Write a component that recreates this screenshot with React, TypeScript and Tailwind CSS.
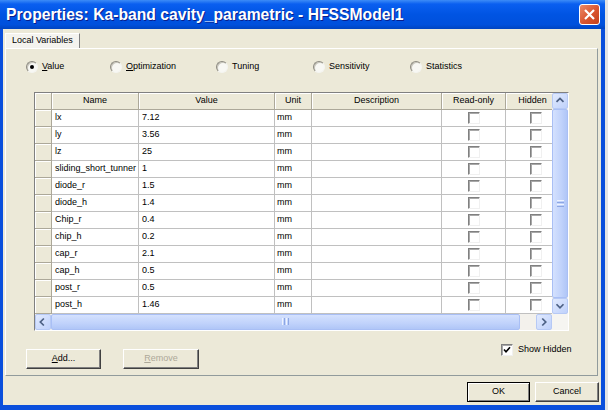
import React from 'react';

const rows = [
    ['lx', '7.12'],
    ['ly', '3.56'],
    ['lz', '25'],
    ['sliding_short_tunner', '1'],
    ['diode_r', '1.5'],
    ['diode_h', '1.4'],
    ['Chip_r', '0.4'],
    ['chip_h', '0.2'],
    ['cap_r', '2.1'],
    ['cap_h', '0.5'],
    ['post_r', '0.5'],
    ['post_h', '1.46'],
];

const cols = [
    { label: 'Name', w: 'w-[87px]' },
    { label: 'Value', w: 'w-[136px]' },
    { label: 'Unit', w: 'w-[37px]' },
    { label: 'Description', w: 'w-[130px]' },
    { label: 'Read-only', w: 'w-[64px]' },
    { label: 'Hidden', w: 'w-[64px] pr-[10px]' },
];

function Radio({ checked, label, u }: { checked?: boolean; label: string; u?: boolean }) {
    return (
        <div className="flex items-center gap-[4px]">
            <span className="w-[12px] h-[12px] rounded-full bg-[#f8f8f4] border border-t-[#8c8a80] border-l-[#8c8a80] border-b-[#f4f4f0] border-r-[#f4f4f0] shadow-[inset_1px_1px_0_#c8c6bc] flex items-center justify-center">
                {checked && <span className="w-[4px] h-[4px] rounded-full bg-black" />}
            </span>
            <span>
                {u ? <><span className="underline">{label[0]}</span>{label.slice(1)}</> : label}
            </span>
        </div>
    );
}

function Check({ checked }: { checked?: boolean }) {
    return (
        <span className="w-[12px] h-[12px] bg-white border border-t-[#808080] border-l-[#808080] border-b-[#f0f0f0] border-r-[#f0f0f0] shadow-[inset_1px_1px_0_#a8a8a8] flex items-center justify-center">
            {checked && (
                <svg width="8" height="8" viewBox="0 0 8 8">
                    <path d="M1 3.5 L3 5.8 L7 1.2" stroke="#000" strokeWidth="1.6" fill="none" />
                </svg>
            )}
        </span>
    );
}

function Arrow({ dir }: { dir: 'up' | 'down' | 'left' | 'right' }) {
    const d = {
        up: 'M4 9 L8 5 L12 9',
        down: 'M4 6 L8 10 L12 6',
        left: 'M9 4 L5 8 L9 12',
        right: 'M6 4 L10 8 L6 12',
    }[dir];
    return (
        <div className="w-[16px] h-[16px] rounded-[2px] border border-[#b6c9f5] bg-[linear-gradient(135deg,#e1eafe,#bfd1fb)] flex items-center justify-center">
            <svg width="16" height="16" viewBox="0 0 16 16">
                <path d={d} stroke="#4d6185" strokeWidth="2" fill="none" />
            </svg>
        </div>
    );
}

function Btn({ children, def, disabled, w }: { children: React.ReactNode; def?: boolean; disabled?: boolean; w: string }) {
    return (
        <div
            className={`${w} h-[20px] flex items-center justify-center bg-[#ece9d8] ${
                def
                    ? 'border border-black shadow-[inset_1px_1px_0_#fff,inset_-1px_-1px_0_#808080]'
                    : 'border border-t-white border-l-white border-r-[#404040] border-b-[#404040] shadow-[inset_-1px_-1px_0_#808080]'
            } ${disabled ? 'text-[#aca899]' : 'text-black'}`}
        >
            {children}
        </div>
    );
}

export default function App() {
    return (
        <div className="w-[608px] h-[410px] overflow-hidden bg-[#e4e4e4] flex font-[family-name:Liberation_Sans,Arial,sans-serif] text-[9px] text-black">
            <div className="w-[605px] h-[410px] flex flex-col bg-[#0a4fdc]">
                {/* title bar */}
                <div className="h-[29px] flex items-center pl-[6px] pr-[5px] bg-[linear-gradient(to_bottom,#3d8cf7_0%,#0a5ff0_14%,#0054e3_50%,#0050dc_85%,#0044c0_100%)]">
                    <span className="text-white font-bold text-[15.7px] [text-shadow:1px_1px_#0a1e8c] flex-1 whitespace-nowrap">
                        Properties: Ka-band cavity_parametric - HFSSModel1
                    </span>
                    <div className="w-[21px] h-[21px] rounded-[3px] border border-white bg-[linear-gradient(135deg,#eb8a68,#d9542e_55%,#c4401c)] flex items-center justify-center">
                        <svg width="13" height="13" viewBox="0 0 13 13">
                            <path d="M2 2 L11 11 M11 2 L2 11" stroke="#fff" strokeWidth="2.2" />
                        </svg>
                    </div>
                </div>

                {/* body */}
                <div className="flex-1 ml-[3px] mr-[4px] mb-[5px] bg-[#ece9d8] flex flex-col">
                    <div className="pt-[4px] pl-[2px] flex">
                        <div className="h-[15px] w-[75px] flex items-center pl-[6px] border-t border-l border-white border-r border-r-[#808080] bg-[#f4f3ee]">
                            Local Variables
                        </div>
                    </div>

                    {/* tab panel */}
                    <div className="ml-[2px] w-[593px] h-[328px] border border-t-white border-l-white border-r-[#919b9c] border-b-[#919b9c] flex flex-col">
                        <div className="pt-[11px] pl-[20px] flex">
                            <div className="w-[84px]"><Radio checked label="Value" u /></div>
                            <div className="w-[106px]"><Radio label="Optimization" u /></div>
                            <div className="w-[97px]"><Radio label="Tuning" /></div>
                            <div className="w-[97px]"><Radio label="Sensitivity" /></div>
                            <div><Radio label="Statistics" /></div>
                        </div>

                        {/* grid */}
                        <div className="mt-[18px] ml-[28px] w-[535px] border border-t-[#808080] border-l-[#808080] border-r-white border-b-white flex flex-col">
                            <div className="flex">
                                <div className="w-[517px] overflow-hidden">
                                    <div className="w-[600px]">
                                        <div className="flex h-[17px]">
                                            <div className="w-[17px] bg-[#ece9d8] border-r border-b border-[#aca899] shadow-[inset_1px_1px_0_#fff]" />
                                            {cols.map(c => (
                                                <div key={c.label} className={`${c.w} flex items-center justify-center bg-[#ece9d8] border-r border-b border-[#aca899] shadow-[inset_1px_1px_0_#fff]`}>
                                                    {c.label}
                                                </div>
                                            ))}
                                        </div>
                                        {rows.map(([n, v]) => (
                                            <div key={n} className="flex h-[17px]">
                                                <div className="w-[17px] bg-[#ece9d8] border-r border-b border-[#aca899] shadow-[inset_1px_1px_0_#fff]" />
                                                <div className="w-[87px] pl-[3px] flex items-center bg-white border-r border-b border-[#c0c0c0] whitespace-nowrap overflow-hidden">{n}</div>
                                                <div className="w-[136px] pl-[3px] flex items-center bg-white border-r border-b border-[#c0c0c0]">{v}</div>
                                                <div className="w-[37px] pl-[2px] flex items-center bg-white border-r border-b border-[#c0c0c0]">mm</div>
                                                <div className="w-[130px] bg-white border-r border-b border-[#c0c0c0]" />
                                                <div className="w-[64px] flex items-center justify-center bg-white border-r border-b border-[#c0c0c0]"><Check /></div>
                                                <div className="w-[64px] flex items-center justify-center pr-[3px] bg-white border-r border-b border-[#c0c0c0]"><Check /></div>
                                            </div>
                                        ))}
                                    </div>
                                </div>
                                {/* vertical scrollbar */}
                                <div className="w-[16px] h-[221px] flex flex-col bg-[#f3f1ec]">
                                    <Arrow dir="up" />
                                    <div className="flex-1 rounded-[2px] border border-[#a9bff5] bg-[linear-gradient(to_right,#d4e1fe,#c0d2fb_60%,#b0c6f7)] flex items-center justify-center">
                                        <div className="w-[7px] flex flex-col gap-[1px]">
                                            <div className="h-[1px] bg-[#eef3ff]" />
                                            <div className="h-[1px] bg-[#8ca6e4]" />
                                            <div className="h-[1px] bg-[#eef3ff]" />
                                            <div className="h-[1px] bg-[#8ca6e4]" />
                                        </div>
                                    </div>
                                    <Arrow dir="down" />
                                </div>
                            </div>
                            {/* horizontal scrollbar */}
                            <div className="flex h-[16px]">
                                <div className="w-[517px] flex bg-[#f3f1ec]">
                                    <Arrow dir="left" />
                                    <div className="w-[469px] rounded-[2px] border border-[#a9bff5] bg-[linear-gradient(to_bottom,#d4e1fe,#c0d2fb_60%,#b0c6f7)] flex items-center justify-center">
                                        <div className="h-[7px] flex gap-[1px]">
                                            <div className="w-[1px] bg-[#eef3ff]" />
                                            <div className="w-[1px] bg-[#8ca6e4]" />
                                            <div className="w-[1px] bg-[#eef3ff]" />
                                            <div className="w-[1px] bg-[#8ca6e4]" />
                                        </div>
                                    </div>
                                    <div className="flex-1" />
                                    <Arrow dir="right" />
                                </div>
                                <div className="w-[16px] bg-[#f6f5f1]" />
                            </div>
                        </div>

                        {/* bottom controls */}
                        <div className="mt-[13px] pl-[20px] flex">
                            <div className="mt-[5px] flex gap-[22px]">
                                <Btn w="w-[75px]"><span><span className="underline">A</span>dd...</span></Btn>
                                <Btn w="w-[76px]" disabled><span><span className="underline">R</span>emove</span></Btn>
                            </div>
                            <div className="ml-[302px] flex items-center gap-[5px] h-[12px]">
                                <Check checked />
                                <span>Show Hidden</span>
                            </div>
                        </div>
                    </div>

                    {/* footer buttons */}
                    <div className="mt-[6px] mr-[2px] flex justify-end gap-[5px]">
                        <Btn w="w-[63px]" def>OK</Btn>
                        <Btn w="w-[64px]">Cancel</Btn>
                    </div>
                </div>
            </div>
        </div>
    );
}
